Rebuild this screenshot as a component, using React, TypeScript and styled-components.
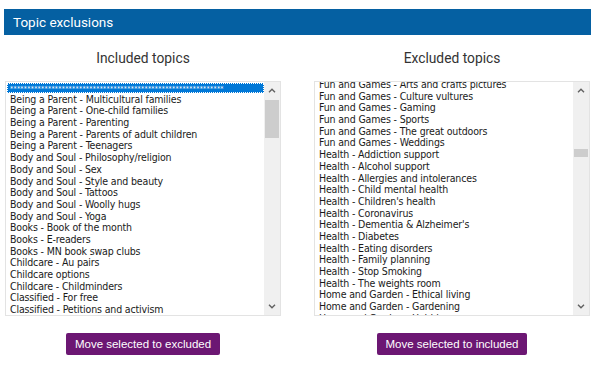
import { FC } from 'react';
import styled, { createGlobalStyle } from 'styled-components';

const GlobalStyle = createGlobalStyle`
  html, body {
    margin: 0;
    padding: 0;
    background: #ffffff;
  }
`;

const included = [
  '**************************************************************',
  'Being a Parent - Multicultural families',
  'Being a Parent - One-child families',
  'Being a Parent - Parenting',
  'Being a Parent - Parents of adult children',
  'Being a Parent - Teenagers',
  'Body and Soul - Philosophy/religion',
  'Body and Soul - Sex',
  'Body and Soul - Style and beauty',
  'Body and Soul - Tattoos',
  'Body and Soul - Woolly hugs',
  'Body and Soul - Yoga',
  'Books - Book of the month',
  'Books - E-readers',
  'Books - MN book swap clubs',
  'Childcare - Au pairs',
  'Childcare options',
  'Childcare - Childminders',
  'Classified - For free',
  'Classified - Petitions and activism',
];

const excluded = [
  'Fun and Games - Arts and crafts pictures',
  'Fun and Games - Culture vultures',
  'Fun and Games - Gaming',
  'Fun and Games - Sports',
  'Fun and Games - The great outdoors',
  'Fun and Games - Weddings',
  'Health - Addiction support',
  'Health - Alcohol support',
  'Health - Allergies and intolerances',
  'Health - Child mental health',
  "Health - Children's health",
  'Health - Coronavirus',
  "Health - Dementia & Alzheimer's",
  'Health - Diabetes',
  'Health - Eating disorders',
  'Health - Family planning',
  'Health - Stop Smoking',
  'Health - The weights room',
  'Home and Garden - Ethical living',
  'Home and Garden - Gardening',
  'Home and Garden - Hobbies',
];

type ListProps = {
  items: string[];
  selected?: number;
  offset: number;
  thumbTop: number;
  thumbHeight: number;
};

const TopicList: FC<ListProps> = ({ items, selected, offset, thumbTop, thumbHeight }) => {
  return (
    <ListBox>
      <Viewport>
        <Items $offset={offset}>
          {items.map((item, i) => (
            <Item key={item + i} $selected={i === selected}>
              {item}
            </Item>
          ))}
        </Items>
      </Viewport>
      <Scrollbar>
        <Arrow>
          <svg width="8" height="5" viewBox="0 0 8 5">
            <path d="M1 4.2 L4 1.2 L7 4.2" fill="none" stroke="#606060" strokeWidth="1.4" />
          </svg>
        </Arrow>
        <Track>
          <Thumb style={{ marginTop: thumbTop, height: thumbHeight }} />
        </Track>
        <Arrow>
          <svg width="8" height="5" viewBox="0 0 8 5">
            <path d="M1 0.8 L4 3.8 L7 0.8" fill="none" stroke="#606060" strokeWidth="1.4" />
          </svg>
        </Arrow>
      </Scrollbar>
    </ListBox>
  );
};

const App: FC = () => {
  return (
    <Page>
      <GlobalStyle />
      <TitleBar>Topic exclusions</TitleBar>
      <Columns>
        <Column>
          <ColumnTitle>Included topics</ColumnTitle>
          <TopicList items={included} selected={0} offset={0} thumbTop={1} thumbHeight={38} />
          <MoveButton type="button">Move selected to excluded</MoveButton>
        </Column>
        <Column>
          <ColumnTitle>Excluded topics</ColumnTitle>
          <TopicList items={excluded} offset={-3} thumbTop={50} thumbHeight={8} />
          <MoveButton type="button">Move selected to included</MoveButton>
        </Column>
      </Columns>
    </Page>
  );
};

export default App;

const Page = styled.div`
  width: 587px;
  margin: 9px 0 0 4px;
`;

const TitleBar = styled.div`
  height: 26px;
  background: #0560a2;
  color: #ffffff;
  font-family: Roboto, 'Liberation Sans', sans-serif;
  font-size: 13.5px;
  line-height: 26px;
  padding-left: 9px;
`;

const Columns = styled.div`
  display: grid;
  grid-template-columns: 276px 276px;
  justify-content: space-between;
  padding: 0 1px;
`;

const Column = styled.div`
  display: flex;
  flex-direction: column;
  align-items: center;
`;

const ColumnTitle = styled.h3`
  margin: 15px 0 0;
  height: 31px;
  font-family: Roboto, 'Liberation Sans', sans-serif;
  font-weight: 400;
  font-size: 13.8px;
  line-height: 16px;
  color: #333333;
`;

const ListBox = styled.div`
  width: 276px;
  height: 235px;
  box-sizing: border-box;
  border: 1px solid #e3e3e3;
  display: flex;
  background: #ffffff;
`;

const Viewport = styled.div`
  flex: 1;
  min-width: 0;
  overflow: hidden;
  padding-left: 1px;
`;

const Items = styled.div<{ $offset: number }>`
  margin-top: ${(p) => p.$offset}px;
`;

const Item = styled.div<{ $selected?: boolean }>`
  height: ${(p) => (p.$selected ? '10px' : '11.7px')};
  line-height: ${(p) => (p.$selected ? '12px' : '11.7px')};
  margin: ${(p) => (p.$selected ? '1.2px 0 0.5px' : '0')};
  padding-left: 3px;
  white-space: nowrap;
  overflow: hidden;
  font-family: 'DejaVu Sans Condensed', 'Liberation Sans', sans-serif;
  font-size: ${(p) => (p.$selected ? '7px' : '10.5px')};
  letter-spacing: ${(p) => (p.$selected ? '0.3px' : '-0.15px')};
  color: ${(p) => (p.$selected ? '#ffffff' : '#1a1a1a')};
  background: ${(p) => (p.$selected ? '#0078d7' : 'transparent')};
  outline: ${(p) => (p.$selected ? '1px dotted #ffffff' : 'none')};
  outline-offset: -1px;
`;

const Scrollbar = styled.div`
  width: 16px;
  flex-shrink: 0;
  background: #f0f0f0;
  display: flex;
  flex-direction: column;
`;

const Arrow = styled.div`
  height: 17px;
  display: flex;
  align-items: center;
  justify-content: center;
`;

const Track = styled.div`
  flex: 1;
  display: flex;
  flex-direction: column;
  align-items: center;
`;

const Thumb = styled.div`
  width: 14px;
  background: #cdcdcd;
`;

const MoveButton = styled.button`
  margin-top: 17px;
  height: 22px;
  padding: 0 9px;
  border: none;
  border-radius: 2px;
  background: #6c1773;
  color: #ffffff;
  font-family: 'Liberation Sans', Arial, sans-serif;
  font-size: 11.5px;
  cursor: pointer;
`;
